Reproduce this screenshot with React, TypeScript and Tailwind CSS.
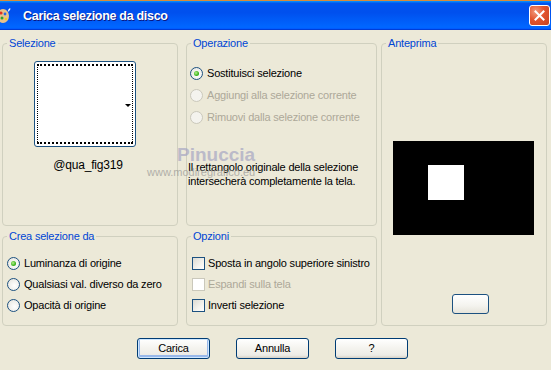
import React from 'react';

const Radio = ({ checked, disabled }: { checked?: boolean; disabled?: boolean }) => (
    <span
        className={`relative inline-block h-[13px] w-[13px] shrink-0 rounded-full border ${
            disabled
                ? 'border-[#CAC8BB] bg-[#F4F3EE]'
                : 'border-[#1C5180] bg-[radial-gradient(circle_at_60%_60%,#ffffff_0%,#ECEBE6_70%,#DCD9CC_100%)]'
        }`}
    >
        {checked && (
            <span className="absolute left-[3px] top-[3px] h-[5px] w-[5px] rounded-full bg-[radial-gradient(circle_at_40%_40%,#B6F38C_0%,#3CB21C_60%,#21A121_100%)]" />
        )}
    </span>
);

const Check = ({ disabled }: { disabled?: boolean }) => (
    <span
        className={`inline-block h-[13px] w-[13px] shrink-0 border ${
            disabled
                ? 'border-[#CAC8BB] bg-white'
                : 'border-[#1C5180] bg-[linear-gradient(135deg,#DCDBD3_0%,#F4F3EE_60%,#ffffff_100%)]'
        }`}
    />
);

const XpButton = ({ label, isDefault }: { label: string; isDefault?: boolean }) => (
    <button
        className={`h-[21px] w-[73px] rounded-[3px] border border-[#003C74] bg-[linear-gradient(180deg,#ffffff_0%,#F4F3EE_50%,#ECEBE6_85%,#D6D0C5_100%)] text-[11px] text-black ${
            isDefault ? 'shadow-[inset_0_0_0_1px_#CEE7FF,inset_0_-1px_0_2px_#98B8EA]' : ''
        }`}
    >
        {label}
    </button>
);

const Group = ({
    title,
    className,
    children,
}: {
    title: string;
    className: string;
    children?: React.ReactNode;
}) => (
    <fieldset className={`rounded-[4px] border border-[#D0D0BF] ${className}`}>
        <legend className="ml-[4px] px-[2px] text-[11px] leading-[13px] text-[#0046D5]">{title}</legend>
        {children}
    </fieldset>
);

export default function App() {
    return (
        <div className="relative h-[370px] w-[551px] overflow-hidden bg-[#ECE9D8] font-['Liberation_Sans',Arial,sans-serif] text-[11px] tracking-[-0.2px] text-black">
            {/* barra del titolo */}
            <div className="h-[1px] bg-[#D98B3A]" />
            <div className="flex h-[29px] items-center bg-[linear-gradient(180deg,#0997FF_0%,#0053EE_8%,#0050EE_40%,#0066FF_88%,#0066FF_93%,#005BFF_95%,#003DD7_96%,#003DD7_100%)] pr-[1px]">
                <svg width="12" height="16" viewBox="0 0 12 16" className="ml-[-1px] shrink-0">
                    <ellipse cx="4" cy="8" rx="6" ry="7" fill="#E8C28A" />
                    <circle cx="2" cy="5" r="1.6" fill="#E03020" />
                    <circle cx="6" cy="6" r="1.4" fill="#2A6AE0" />
                    <circle cx="3" cy="10" r="1.5" fill="#30A030" />
                    <circle cx="7" cy="11" r="1.3" fill="#F0D020" />
                    <path d="M9 2 L11 0 L11.5 1 L9.5 4 Z" fill="#ffffff" />
                </svg>
                <span className="ml-[12px] mt-[2px] text-[12.5px] font-bold tracking-[-0.3px] text-white [text-shadow:1px_1px_#0A1883]">
                    Carica selezione da disco
                </span>
                <div className="ml-auto mr-[0px] flex h-[21px] w-[21px] items-center justify-center rounded-[3px] border border-white bg-[radial-gradient(circle_at_30%_30%,#F29B7E_0%,#E2542E_45%,#C8421E_100%)]">
                    <svg width="11" height="11" viewBox="0 0 11 11">
                        <path d="M1.5 1.5 L9.5 9.5 M9.5 1.5 L1.5 9.5" stroke="#ffffff" strokeWidth="2" strokeLinecap="square" />
                    </svg>
                </div>
            </div>

            {/* corpo */}
            <div className="flex pl-[2px] pt-[7px]">
                {/* colonna sinistra */}
                <div className="flex w-[176px] flex-col">
                    <Group title="Selezione" className="h-[189px]">
                        <div className="flex flex-col items-center pt-[11px]">
                            <div className="ml-[-11px] h-[86px] w-[102px] rounded-[3px] border border-[#1C5180] bg-white p-[2px]">
                                <div className="relative h-full w-full border border-dotted border-black border-t-2 border-b-2 border-t-black border-b-black">
                                    <span className="absolute right-[1px] top-[38px] h-0 w-0 border-x-[3px] border-t-[3px] border-x-transparent border-t-black" />
                                </div>
                            </div>
                            <div className="ml-[-4px] mt-[9px] text-[12px]">@qua_fig319</div>
                        </div>
                    </Group>
                    <Group title="Crea selezione da" className="mt-[4px] h-[96px]">
                        <div className="flex flex-col gap-[8px] pl-[4px] pt-[14px]">
                            <label className="flex items-center gap-[4px] leading-[13px]">
                                <Radio checked />
                                <span>Luminanza di origine</span>
                            </label>
                            <label className="flex items-center gap-[4px] leading-[13px]">
                                <Radio />
                                <span>Qualsiasi val. diverso da zero</span>
                            </label>
                            <label className="flex items-center gap-[4px] leading-[13px]">
                                <Radio />
                                <span>Opacità di origine</span>
                            </label>
                        </div>
                    </Group>
                </div>

                {/* colonna centrale */}
                <div className="ml-[8px] flex w-[191px] flex-col">
                    <Group title="Operazione" className="h-[189px]">
                        <div className="flex flex-col gap-[9px] pl-[3px] pt-[17px]">
                            <label className="flex items-center gap-[4px] leading-[13px]">
                                <Radio checked />
                                <span>Sostituisci selezione</span>
                            </label>
                            <label className="flex items-center gap-[4px] leading-[13px] text-[#ACA899]">
                                <Radio disabled />
                                <span>Aggiungi alla selezione corrente</span>
                            </label>
                            <label className="flex items-center gap-[4px] leading-[13px] text-[#ACA899]">
                                <Radio disabled />
                                <span>Rimuovi dalla selezione corrente</span>
                            </label>
                        </div>
                        <p className="mt-[36px] whitespace-nowrap pl-[1px] leading-[14px]">
                            Il rettangolo originale della selezione
                            <br />
                            intersecherà completamente la tela.
                        </p>
                    </Group>
                    <Group title="Opzioni" className="mt-[4px] h-[96px]">
                        <div className="flex flex-col gap-[8px] pl-[5px] pt-[14px]">
                            <label className="flex items-center gap-[3px] whitespace-nowrap leading-[13px]">
                                <Check />
                                <span>Sposta in angolo superiore sinistro</span>
                            </label>
                            <label className="flex items-center gap-[3px] leading-[13px] text-[#ACA899]">
                                <Check disabled />
                                <span>Espandi sulla tela</span>
                            </label>
                            <label className="flex items-center gap-[3px] leading-[13px]">
                                <Check />
                                <span>Inverti selezione</span>
                            </label>
                        </div>
                    </Group>
                </div>

                {/* colonna destra */}
                <Group title="Anteprima" className="ml-[4px] h-[289px] w-[166px]">
                    <div className="flex flex-col items-center">
                        <div className="ml-[-2px] mt-[91px] flex h-[94px] w-[141px] items-start bg-black pl-[35px] pt-[24px]">
                            <div className="h-[35px] w-[36px] bg-white" />
                        </div>
                        <button className="ml-[12px] mt-[59px] h-[20px] w-[37px] rounded-[3px] border border-[#1C5180] bg-[linear-gradient(180deg,#ffffff_0%,#F4F3EE_60%,#E6E4DA_100%)]" />
                    </div>
                </Group>
            </div>

            {/* pulsanti */}
            <div className="mt-[12px] flex gap-[26px] pl-[137px]">
                <XpButton label="Carica" isDefault />
                <XpButton label="Annulla" />
                <XpButton label="?" />
            </div>

            {/* filigrana */}
            <div className="pointer-events-none absolute left-[147px] top-[145px] flex flex-col items-start opacity-60">
                <span className="ml-[30px] text-[19px] font-semibold leading-[20px] tracking-[0px] text-[#9C9CC0]">Pinuccia</span>
                <span className="mt-[1px] text-[11px] leading-[12px] tracking-[0px] text-[#8A8A8A]">www.modiregrafico.eu</span>
            </div>
        </div>
    );
}
